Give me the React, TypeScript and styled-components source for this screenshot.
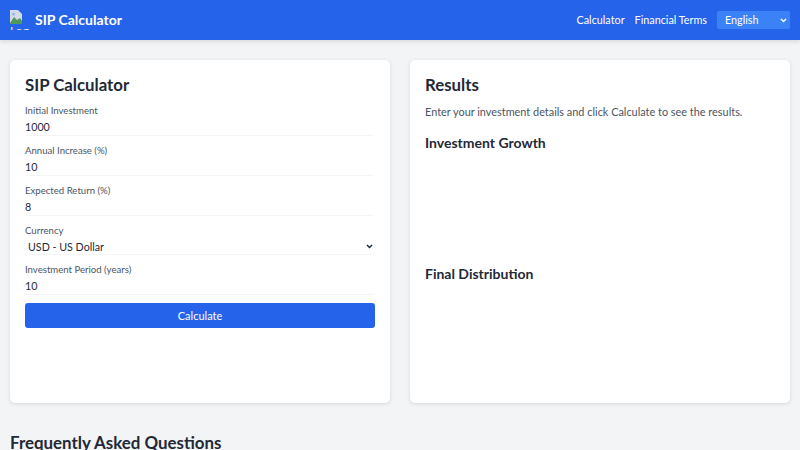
import { useState } from "react";
import styled, { createGlobalStyle } from "styled-components";

const fields = [
  { label: "Initial Investment", value: "1000" },
  { label: "Annual Increase (%)", value: "10" },
  { label: "Expected Return (%)", value: "8" },
];

const chevron = (color: string) =>
  `url("data:image/svg+xml,%3Csvg xmlns='http://www.w3.org/2000/svg' width='7' height='5' viewBox='0 0 7 5'%3E%3Cpath d='M1 1l2.5 2.5L6 1' fill='none' stroke='%23${color}' stroke-width='1.5'/%3E%3C/svg%3E")`;

const App = () => {
  const [currency, setCurrency] = useState("USD");
  const [language, setLanguage] = useState("en");
  const [period, setPeriod] = useState("10");

  return (
    <>
      <GlobalStyle />
      <Header>
        <Brand>
          <BrokenLogo>
            <LogoIcon width="12" height="14" viewBox="0 0 12 14">
              <path d="M0 0h8l4 4v10H0z" fill="#d5dbe6" />
              <path d="M0 13l4-6 3 3 3-2 2 3v3H0z" fill="#4f9a5b" />
              <circle cx="3.5" cy="4" r="1.5" fill="#8fb8ef" />
            </LogoIcon>
            <LogoAlt>Logo</LogoAlt>
          </BrokenLogo>
          <BrandName>SIP Calculator</BrandName>
        </Brand>
        <Nav>
          <NavLink>Calculator</NavLink>
          <NavLink>Financial Terms</NavLink>
          <LanguageSelect
            value={language}
            onChange={(e) => setLanguage(e.target.value)}
          >
            <option value="en">English</option>
            <option value="es">Español</option>
          </LanguageSelect>
        </Nav>
      </Header>
      <Main>
        <Columns>
          <Card>
            <CardTitle>SIP Calculator</CardTitle>
            <Form>
              {fields.map((field) => (
                <Field key={field.label}>
                  <Label>{field.label}</Label>
                  <Input defaultValue={field.value} />
                </Field>
              ))}
              <Field>
                <Label>Currency</Label>
                <CurrencySelect
                  value={currency}
                  onChange={(e) => setCurrency(e.target.value)}
                >
                  <option value="USD">USD - US Dollar</option>
                  <option value="EUR">EUR - Euro</option>
                </CurrencySelect>
              </Field>
              <Field>
                <Label>Investment Period (years)</Label>
                <Input
                  value={period}
                  onChange={(e) => setPeriod(e.target.value)}
                />
              </Field>
              <SubmitButton type="button">Calculate</SubmitButton>
            </Form>
          </Card>
          <Card>
            <CardTitle>Results</CardTitle>
            <Hint>
              Enter your investment details and click Calculate to see the
              results.
            </Hint>
            <ChartTitle>Investment Growth</ChartTitle>
            <ChartArea />
            <ChartTitle>Final Distribution</ChartTitle>
          </Card>
        </Columns>
        <FaqTitle>Frequently Asked Questions</FaqTitle>
      </Main>
    </>
  );
};

const GlobalStyle = createGlobalStyle`
  html, body {
    margin: 0;
    height: 450px;
    overflow: hidden;
    background: #f3f4f6;
    font-family: Lato, "Noto Sans", sans-serif;
    color: #1f2937;
  }
  * {
    box-sizing: border-box;
  }
`;

const Header = styled.header`
  height: 40px;
  padding: 0 10px;
  display: flex;
  align-items: center;
  justify-content: space-between;
  background: #2563eb;
  color: #fff;
  box-shadow: 0 2px 4px rgba(0, 0, 0, 0.1);
`;

const Brand = styled.div`
  display: flex;
  align-items: center;
  gap: 5px;
`;

const BrokenLogo = styled.div`
  width: 20px;
  height: 20px;
  overflow: hidden;
  color: #e5e7eb;
  font-size: 12px;
  line-height: 12px;
`;

const LogoIcon = styled.svg`
  display: block;
`;

const LogoAlt = styled.div`
  margin-top: 1px;
`;

const BrandName = styled.span`
  padding-bottom: 2px;
  font-size: 14px;
  font-weight: 700;
`;

const Nav = styled.nav`
  display: flex;
  align-items: center;
  gap: 10px;
`;

const NavLink = styled.a`
  padding-bottom: 2px;
  font-size: 10.8px;
  color: #fff;
`;

const LanguageSelect = styled.select`
  width: 73px;
  height: 18px;
  padding: 0 8px 2px;
  border: 0;
  border-radius: 2px;
  appearance: none;
  background: #3b82f6 ${chevron("ffffff")} no-repeat right 3px center;
  color: #fff;
  font-family: inherit;
  font-size: 10.8px;
`;

const Main = styled.main`
  padding: 20px 10px 0;
`;

const Columns = styled.div`
  display: grid;
  grid-template-columns: 1fr 1fr;
  gap: 20px;
`;

const Card = styled.section`
  height: 343px;
  padding: 14px 15px 15px;
  border-radius: 5px;
  background: #fff;
  box-shadow: 0 1px 4px rgba(0, 0, 0, 0.12);
`;

const CardTitle = styled.h2`
  margin: 0 0 9px;
  font-size: 16.8px;
  line-height: 21px;
  font-weight: 700;
  color: #1f2937;
`;

const Form = styled.form`
  display: flex;
  flex-direction: column;
  gap: 8px;
`;

const Field = styled.div`
  display: flex;
  flex-direction: column;
`;

const Label = styled.label`
  font-size: 9.6px;
  line-height: 14px;
  color: #4b5563;
`;

const Input = styled.input`
  height: 18px;
  padding: 0;
  border: 0;
  border-bottom: 1px solid #f3f4f6;
  border-radius: 3px;
  background: #fff;
  color: #1f2937;
  font-family: inherit;
  font-size: 10.7px;
  outline: none;
`;

const CurrencySelect = styled.select`
  height: 17px;
  padding: 0 3px;
  border: 0;
  border-bottom: 1px solid #f3f4f6;
  border-radius: 3px;
  appearance: none;
  background: #fff ${chevron("1f2937")} no-repeat right 2px center;
  color: #1f2937;
  font-family: inherit;
  font-size: 10.7px;
`;

const SubmitButton = styled.button`
  height: 25px;
  border: 0;
  border-radius: 3px;
  background: #2563eb;
  color: #fff;
  font-family: inherit;
  font-size: 11px;
`;

const Hint = styled.p`
  margin: 0 0 13px;
  font-size: 10.9px;
  line-height: 16px;
  color: #4b5563;
`;

const ChartTitle = styled.h3`
  margin: 0;
  font-size: 14px;
  line-height: 19px;
  font-weight: 700;
  color: #1f2937;
`;

const ChartArea = styled.div`
  height: 112px;
`;

const FaqTitle = styled.h2`
  margin: 29px 0 0;
  font-size: 16.9px;
  line-height: 21px;
  font-weight: 700;
  color: #1f2937;
`;

export default App;
